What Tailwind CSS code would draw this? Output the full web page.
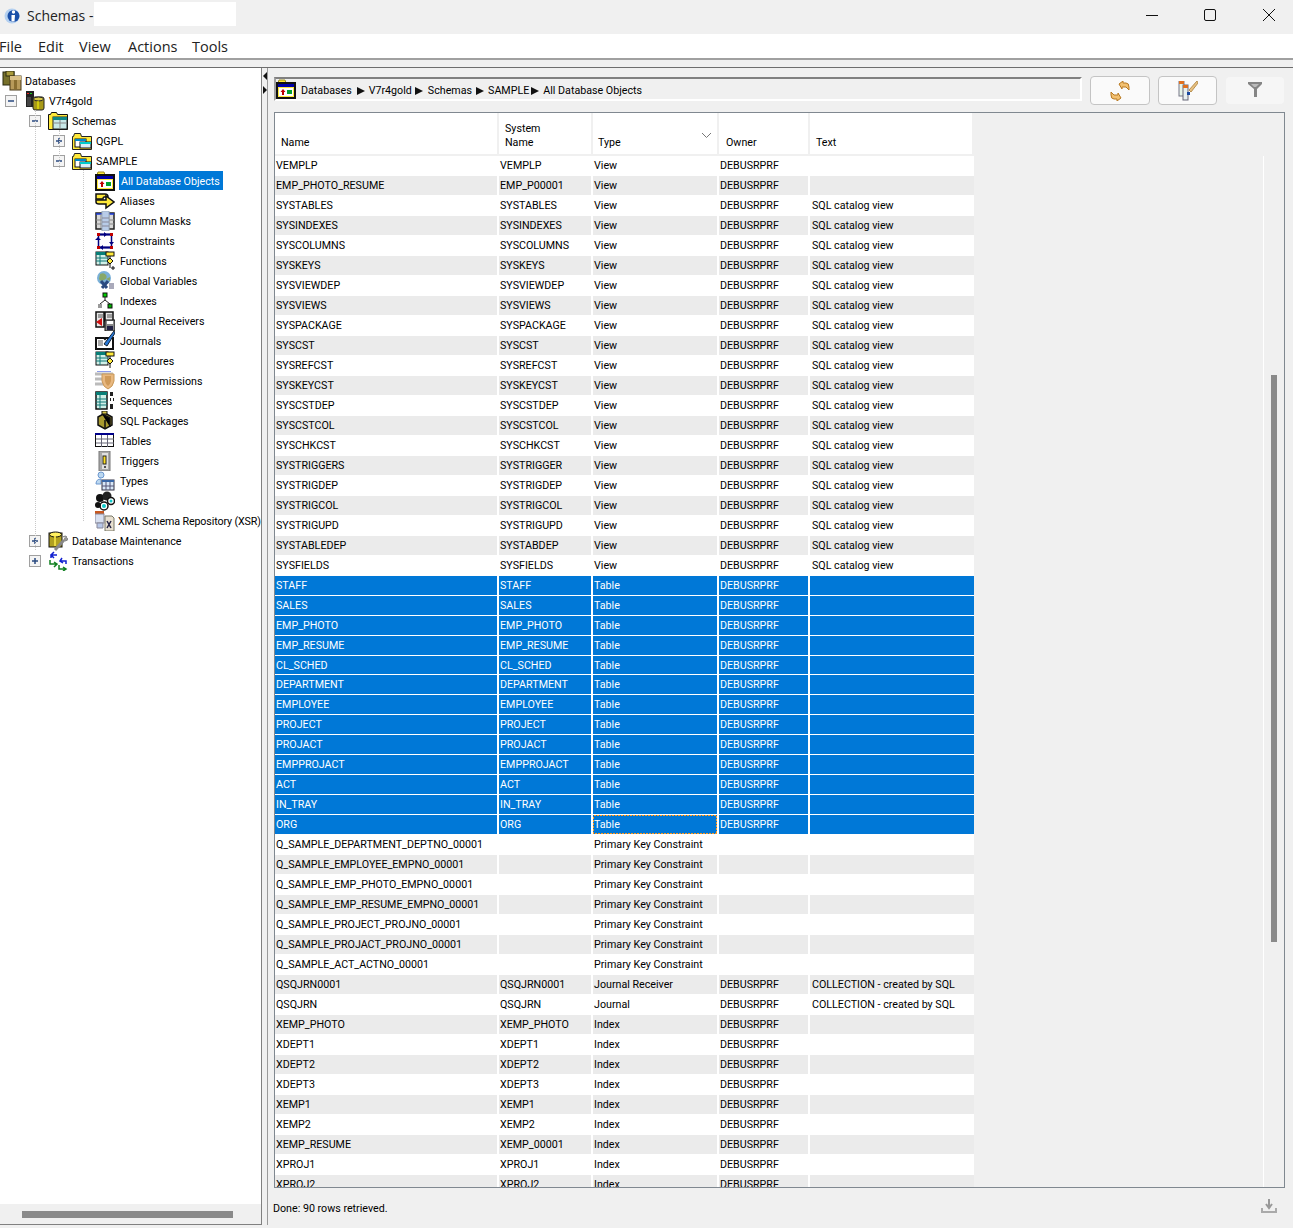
<!DOCTYPE html>
<html lang="en">
<head>
  <meta charset="UTF-8">
  <title>Schemas</title>
  <script src="https://cdn.jsdelivr.net/npm/@tailwindcss/browser@4"></script>
</head>
<body class="bg-[#f0f0f0] overflow-hidden">

<svg class="hidden">
  <defs>
    <symbol id="i-db" viewBox="0 0 20 20"><rect x="1" y="1" width="11" height="13" fill="#77702a" stroke="#2a2a10"/><rect x="4" y="0" width="8" height="5" fill="#a89a3a" stroke="#2a2a10"/><rect x="8" y="5" width="11" height="14" fill="#b89a5a" stroke="#4a3a18"/><rect x="8" y="5" width="11" height="4" fill="#d8c088"/><rect x="12" y="9" width="3" height="9" fill="#8a6e30"/></symbol>
    <symbol id="i-sys" viewBox="0 0 20 20"><rect x="1" y="0" width="8" height="16" fill="#222"/><rect x="2" y="2" width="2" height="1" fill="#e22"/><rect x="5" y="2" width="2" height="1" fill="#2c2"/><path d="M3 6v9M5 6v9" stroke="#666"/><rect x="8" y="6" width="11" height="13" rx="2" fill="#a89a18" stroke="#222"/><ellipse cx="13.5" cy="8" rx="5" ry="2" fill="#d8c848" stroke="#222"/><path d="M13 10v8" stroke="#ff0"/></symbol>
    <symbol id="i-schemas" viewBox="0 0 20 20"><path d="M.5 18.500V3.500h2l1-2h5l1 2h10v15z" fill="#ffe93a" stroke="#111"/><rect x="5" y="6" width="14" height="12" fill="#c8e8e8" stroke="#222"/><rect x="5" y="6" width="14" height="3" fill="#108888"/><path d="M5 12h14M12 9v9" stroke="#888"/></symbol>
    <symbol id="i-lib" viewBox="0 0 20 20"><path d="M.5 18.500V5.500h1l1-3h6l1 3h10v13z" fill="#ffe93a" stroke="#222"/><rect x="3" y="8" width="11" height="8" fill="#fff" stroke="#111"/><rect x="3" y="8" width="11" height="2" fill="#08c"/><rect x="8" y="11" width="11" height="6" fill="#d8f0f8" stroke="#111"/><rect x="8" y="11" width="11" height="2" fill="#0cc"/></symbol>
    <symbol id="i-all" viewBox="0 0 20 20"><path d="M2 4l1-3h6l1 3" fill="#ffe93a" stroke="#998a20"/><rect x="1" y="4" width="18" height="15" fill="#ffe93a" stroke="#111" stroke-width="2"/><rect x="2" y="5" width="16" height="3" fill="#0000a8"/><rect x="3" y="9" width="14" height="8" fill="#fff"/><path d="M7 10l2.500 3h-1.500v3h-2v-3h-1.500z" fill="#c00000"/><rect x="11" y="11" width="5" height="4" fill="#00a030"/></symbol>
    <symbol id="i-alias" viewBox="0 0 20 20"><path d="M1 3h9q3 0 3 3h-4q-1 0-1 2h-7z" fill="#ffe93a" stroke="#111" stroke-width="1.500"/><path d="M1 9h10v-4l8 6-8 6v-4h-7q-3 0-3-2z" fill="#ffe93a" stroke="#111" stroke-width="1.500"/></symbol>
    <symbol id="i-mask" viewBox="0 0 20 20"><rect x="1" y="2" width="18" height="16" fill="#d8d8d8" stroke="#222" stroke-width="1.500"/><path d="M1 3h18" stroke="#1838d8" stroke-width="1.500"/><path d="M1 9h18M1 13h18M6 3v14M14 3v14" stroke="#888"/><rect x="7" y="0" width="7" height="20" fill="#b8cce8" stroke="#9ab" /><path d="M7 7h7M7 11h7M7 15h7" stroke="#889"/></symbol>
    <symbol id="i-con" viewBox="0 0 20 20"><rect x="3.500" y="3.500" width="13" height="13" fill="none" stroke="#000080" stroke-width="1.500"/><path d="M3.500 3.500h13M3.500 16.500h13" stroke="#000080" stroke-width="2"/><rect x="2" y="2" width="3" height="3" fill="#c00000"/><rect x="15" y="2" width="3" height="3" fill="#c00000"/><rect x="2" y="15" width="3" height="3" fill="#c00000"/><rect x="15" y="15" width="3" height="3" fill="#c00000"/><path d="M9 1l3 2.500-3 2.500zM0 9l3-3 3 3zM14 11l2.500 3 2.500-3zM8 14l-3 2.500 3 2.500z" fill="#000080"/></symbol>
    <symbol id="i-func" viewBox="0 0 20 20"><rect x="1" y="1" width="12" height="13" fill="#d0f0e8" stroke="#111"/><rect x="1" y="1" width="12" height="3" fill="#088078"/><path d="M1 7h12M1 10h12M5 4v10" stroke="#177"/><rect x="11" y="1" width="8" height="4" fill="#ffe93a" stroke="#111"/><path d="M15 5v3" stroke="#111"/><path d="M15 7l3 3-3 3-3-3z" fill="#ffe93a" stroke="#111"/><path d="M15 13v4M16 17h4M18 15v4" stroke="#111"/></symbol>
    <symbol id="i-proc" viewBox="0 0 20 20"><rect x="1" y="1" width="12" height="13" fill="#d0f0e8" stroke="#111"/><rect x="1" y="1" width="12" height="3" fill="#088078"/><path d="M1 7h12M1 10h12M5 4v10" stroke="#177"/><rect x="11" y="1" width="8" height="4" fill="#ffe93a" stroke="#111"/><path d="M15 5v3" stroke="#111"/><path d="M15 7l3 3-3 3-3-3z" fill="#ffe93a" stroke="#111"/><path d="M15 13v4" stroke="#111"/></symbol>
    <symbol id="i-glob" viewBox="0 0 20 20"><circle cx="9" cy="7" r="7" fill="#7ab0d8"/><path d="M5 3q4-2 6 1t-2 5-5-1zM11 8l4-2 0 4z" fill="#88a868"/><path d="M6 10l6 7M13 10l-6 7" stroke="#2a4a80" stroke-width="3"/><path d="M14 13h5M14 15h5M14 17h5" stroke="#557" /></symbol>
    <symbol id="i-idx" viewBox="0 0 20 20"><rect x="8" y="2" width="4" height="4" fill="#00d000" stroke="#111"/><path d="M10 6v3M10 9l-5 4M10 9l5 4" stroke="#222"/><rect x="3" y="13" width="4" height="4" fill="#999"/><rect x="13" y="13" width="4" height="4" fill="#00b000" stroke="#111"/></symbol>
    <symbol id="i-rcv" viewBox="0 0 20 20"><path d="M1 1h8v15h-8zM10 1h8v9h-8z" fill="#e8e8e8" stroke="#111" stroke-width="1.500"/><path d="M3 4h5M3 6h5M12 4h5M12 6h5" stroke="#555"/><path d="M7 7v8l-6-4z" fill="#d01010"/><rect x="10" y="9" width="10" height="11" fill="#888" stroke="#111"/><rect x="12" y="10" width="6" height="3" fill="#fff"/><rect x="12" y="15" width="6" height="4" fill="#224"/></symbol>
    <symbol id="i-jrn" viewBox="0 0 20 20"><path d="M1 7h8l1 1 1-1h7v11h-17z" fill="#fff" stroke="#111" stroke-width="2"/><path d="M3 10h5M3 12h5M3 14h5" stroke="#555"/><path d="M19 0l-10 13 3 2 8-13z" fill="#2878d8" stroke="#123"/></symbol>
    <symbol id="i-perm" viewBox="0 0 20 20"><path d="M0 3h18M0 8h8M0 13h8" stroke="#bbb" stroke-width="3"/><path d="M2 0h14" stroke="#1838d8"/><path d="M7 3h12v7q-1 6-6 8-5-2-6-8z" fill="#e8b880" stroke="#c89858"/><path d="M10 5h6v5q-1 4-3 5-2-1-3-5z" fill="#d09a58"/></symbol>
    <symbol id="i-seq" viewBox="0 0 20 20"><rect x="1" y="1" width="11" height="17" fill="#d0f0e8" stroke="#111" stroke-width="1.500"/><rect x="1" y="1" width="11" height="3" fill="#088078"/><path d="M1 8h11M1 11h11M1 14h11M5 4v14" stroke="#177"/><path d="M15 1h3v4h-3zM15 7h1v3h-1zM18 7h1v3h-1zM15 13h3v5h-3z" fill="#222"/></symbol>
    <symbol id="i-pkg" viewBox="0 0 20 20"><path d="M3 6l7-4 7 4v8l-7 4-7-4z" fill="#a89a30" stroke="#111" stroke-width="1.500"/><path d="M7 3l8 4v9M10 9v8" stroke="#111" stroke-width="1.500"/><rect x="7" y="0" width="5" height="3" fill="#d8c848" stroke="#111"/></symbol>
    <symbol id="i-tab" viewBox="0 0 20 20"><rect x=".5" y="2.500" width="18" height="13" fill="#fff" stroke="#111"/><rect x="0" y="2" width="19" height="2" fill="#00008a"/><path d="M6.500 4v12M12.500 4v12M1 8h18M1 12h18" stroke="#667"/></symbol>
    <symbol id="i-trg" viewBox="0 0 20 20"><rect x="4" y="0" width="11" height="20" fill="#a8a8a8" stroke="#777"/><rect x="7" y="2" width="6" height="16" fill="#e0e0e0"/><rect x="8" y="5" width="3" height="8" fill="#ffe020" stroke="#222"/><circle cx="10" cy="16" r="1" fill="#222"/></symbol>
    <symbol id="i-typ" viewBox="0 0 20 20"><circle cx="6" cy="4" r="3" fill="#bcd8f0" stroke="#6c98d0"/><path d="M1 13q0-5 5-5v5z" fill="#bcd8f0" stroke="#6c98d0"/><rect x="7" y="9" width="12" height="10" fill="#d8e8f8" stroke="#334"/><rect x="7" y="9" width="12" height="2" fill="#3a68a8"/><path d="M11 11v8M15 11v8M7 15h12" stroke="#557"/></symbol>
    <symbol id="i-view" viewBox="0 0 20 20"><circle cx="5" cy="7" r="4" fill="#111"/><circle cx="12" cy="5" r="4.500" fill="#222"/><circle cx="16" cy="10" r="3.500" fill="#fff" stroke="#111" stroke-width="1.500"/><circle cx="16" cy="10" r="1.500" fill="#1cc"/><circle cx="9" cy="15" r="4" fill="#fff" stroke="#111" stroke-width="1.500"/><circle cx="9" cy="15" r="2" fill="#1cc"/><circle cx="3" cy="14" r="3" fill="#111"/></symbol>
    <symbol id="i-xsr" viewBox="0 0 20 20"><rect x="0" y="0" width="9" height="3" fill="#c85820"/><rect x="0" y="3" width="9" height="9" fill="#d8e0f0" stroke="#889"/><path d="M2 12h6v5h-6z" fill="#b8c8e8" stroke="#889"/><path d="M10 5h7l2 2v13h-9z" fill="#e8e0d0" stroke="#776"/><path d="M12 10l4 7M16 10l-4 7" stroke="#224" stroke-width="1.500"/></symbol>
    <symbol id="i-mnt" viewBox="0 0 20 20"><rect x="1" y="2" width="13" height="14" fill="#b0a020" stroke="#111"/><ellipse cx="7.500" cy="3.500" rx="6" ry="2.500" fill="#fff060" stroke="#111"/><path d="M7 5v10" stroke="#e8d840" stroke-width="2"/><path d="M7 19l9-10" stroke="#888" stroke-width="3"/><path d="M14 6q4-2 5 0l-3 2 1 2q3 0 3-3" fill="#999" stroke="#888"/></symbol>
    <symbol id="i-trn" viewBox="0 0 20 20"><path d="M3 7v-3h6M6 1l-3 3 3 3" fill="none" stroke="#1020d0" stroke-width="1.500"/><path d="M2 9v4h6M6 11l3 2-3 3" fill="none" stroke="#108020" stroke-width="1.500"/><path d="M18 13v-3h-6M14 7l-2 3 3 2" fill="none" stroke="#1020d0" stroke-width="1.500"/><path d="M11 14v4h6M15 16l3 2-3 2" fill="none" stroke="#108020" stroke-width="1.500"/></symbol>
    <symbol id="i-plus" viewBox="0 0 12 12"><rect x=".5" y=".5" width="11" height="11" fill="#f4f4f4" stroke="#a0a0a0"/><path d="M3 6h6M6 3v6" stroke="#2a4a80" stroke-width="1.500"/></symbol>
    <symbol id="i-minus" viewBox="0 0 12 12"><rect x=".5" y=".5" width="11" height="11" fill="#f4f4f4" stroke="#a0a0a0"/><path d="M3 6h6" stroke="#2a4a80" stroke-width="1.500"/></symbol>
    <symbol id="i-tri" viewBox="0 0 8 8"><path d="M0 0l8 4-8 4z" fill="#111"/></symbol>
  </defs>
</svg>

<div class="w-[1293px] h-[1228px] flex flex-col font-['Roboto',sans-serif] text-[10.7px] text-black">

  <!-- title bar -->
  <div class="h-[34px] flex items-center bg-[#f0f0f0] shrink-0">
    <svg class="w-[16px] h-[16px] ml-[4px] mt-[-3px]" viewBox="0 0 16 16"><circle cx="8" cy="8" r="7.500" fill="#b4d0f0"/><circle cx="9.500" cy="8" r="6" fill="#1a4fa8"/><circle cx="9.500" cy="4" r="1.700" fill="#fff"/><path d="M7.500 7h3.500l-.5 6.500h-3z" fill="#fff"/></svg>
    <span class="ml-[7px] mt-[-3px] text-[14px] font-['Open_Sans',sans-serif] w-[67px] text-[#222] whitespace-nowrap">Schemas -</span>
    <div class="w-[142px] h-[24px] bg-white mt-[-6px]"></div>
    <div class="ml-auto flex items-center">
      <svg class="w-[12px] h-[12px] mr-[46px] mt-[-4px]" viewBox="0 0 12 12"><path d="M0 6.500h12" stroke="#111"/></svg>
      <svg class="w-[12px] h-[12px] mr-[47px] mt-[-4px]" viewBox="0 0 12 12"><rect x=".5" y=".5" width="11" height="11" rx="1.500" fill="none" stroke="#111"/></svg>
      <svg class="w-[12px] h-[12px] mr-[18px] mt-[-4px]" viewBox="0 0 12 12"><path d="M0 0l12 12M12 0l-12 12" stroke="#111"/></svg>
    </div>
  </div>

  <!-- menu bar -->
  <div class="h-[24px] bg-white flex items-center shrink-0 text-[14.5px] font-['Open_Sans',sans-serif] text-[#222] pt-[2px]">
    <span class="ml-[-1px] w-[39px]">File</span>
    <span class="w-[41px]">Edit</span>
    <span class="w-[49px]">View</span>
    <span class="w-[64px]">Actions</span>
    <span>Tools</span>
  </div>
  <div class="h-[2px] bg-[#a0a0a0] shrink-0"></div>
  <div class="h-[7px] shrink-0"></div>
  <div class="h-[1px] bg-[#6d6d6d] shrink-0"></div>

  <div class="flex flex-1 min-h-0">

    <!-- navigation tree -->
    <div class="w-[261px] h-[1157px] flex flex-col shrink-0">
      <div class="relative h-[1137px] bg-white pt-[3px] overflow-hidden [&_span]:mt-[2px]">
        <div class="absolute left-[35px] top-[42px] h-[440px] border-l border-dotted border-[#c8c8c8]"></div>
        <div class="absolute left-[59px] top-[62px] h-[40px] border-l border-dotted border-[#c8c8c8]"></div>
        <div class="absolute left-[83px] top-[102px] h-[351px] border-l border-dotted border-[#c8c8c8]"></div>

        <div class="flex items-center h-5"><svg class="w-5 h-5 ml-[2px]"><use href="#i-db"/></svg><span class="ml-[3px]">Databases</span></div>
        <div class="flex items-center h-5"><svg class="w-3 h-3 ml-[5px]"><use href="#i-minus"/></svg><svg class="w-5 h-5 ml-[8px]"><use href="#i-sys"/></svg><span class="ml-[4px]">V7r4gold</span></div>
        <div class="flex items-center h-5"><svg class="w-3 h-3 ml-[29px]"><use href="#i-minus"/></svg><svg class="w-5 h-5 ml-[7px]"><use href="#i-schemas"/></svg><span class="ml-[4px]">Schemas</span></div>
        <div class="flex items-center h-5"><svg class="w-3 h-3 ml-[53px]"><use href="#i-plus"/></svg><svg class="w-5 h-5 ml-[7px]"><use href="#i-lib"/></svg><span class="ml-[4px]">QGPL</span></div>
        <div class="flex items-center h-5"><svg class="w-3 h-3 ml-[53px]"><use href="#i-minus"/></svg><svg class="w-5 h-5 ml-[7px]"><use href="#i-lib"/></svg><span class="ml-[4px]">SAMPLE</span></div>
        <div class="flex items-start h-5 pl-[95px]"><svg class="w-5 h-5"><use href="#i-all"/></svg><span class="ml-[4px] !mt-0 bg-[#0078d7] text-white pl-[2px] pr-[3px] h-[19px] leading-[21px]">All Database Objects</span></div>
        <div class="flex items-center h-5 pl-[95px]"><svg class="w-5 h-5"><use href="#i-alias"/></svg><span class="ml-[5px]">Aliases</span></div>
        <div class="flex items-center h-5 pl-[95px]"><svg class="w-5 h-5"><use href="#i-mask"/></svg><span class="ml-[5px]">Column Masks</span></div>
        <div class="flex items-center h-5 pl-[95px]"><svg class="w-5 h-5"><use href="#i-con"/></svg><span class="ml-[5px]">Constraints</span></div>
        <div class="flex items-center h-5 pl-[95px]"><svg class="w-5 h-5"><use href="#i-func"/></svg><span class="ml-[5px]">Functions</span></div>
        <div class="flex items-center h-5 pl-[95px]"><svg class="w-5 h-5"><use href="#i-glob"/></svg><span class="ml-[5px]">Global Variables</span></div>
        <div class="flex items-center h-5 pl-[95px]"><svg class="w-5 h-5"><use href="#i-idx"/></svg><span class="ml-[5px]">Indexes</span></div>
        <div class="flex items-center h-5 pl-[95px]"><svg class="w-5 h-5"><use href="#i-rcv"/></svg><span class="ml-[5px]">Journal Receivers</span></div>
        <div class="flex items-center h-5 pl-[95px]"><svg class="w-5 h-5"><use href="#i-jrn"/></svg><span class="ml-[5px]">Journals</span></div>
        <div class="flex items-center h-5 pl-[95px]"><svg class="w-5 h-5"><use href="#i-proc"/></svg><span class="ml-[5px]">Procedures</span></div>
        <div class="flex items-center h-5 pl-[95px]"><svg class="w-5 h-5"><use href="#i-perm"/></svg><span class="ml-[5px]">Row Permissions</span></div>
        <div class="flex items-center h-5 pl-[95px]"><svg class="w-5 h-5"><use href="#i-seq"/></svg><span class="ml-[5px]">Sequences</span></div>
        <div class="flex items-center h-5 pl-[95px]"><svg class="w-5 h-5"><use href="#i-pkg"/></svg><span class="ml-[5px]">SQL Packages</span></div>
        <div class="flex items-center h-5 pl-[95px]"><svg class="w-5 h-5"><use href="#i-tab"/></svg><span class="ml-[5px]">Tables</span></div>
        <div class="flex items-center h-5 pl-[95px]"><svg class="w-5 h-5"><use href="#i-trg"/></svg><span class="ml-[5px]">Triggers</span></div>
        <div class="flex items-center h-5 pl-[95px]"><svg class="w-5 h-5"><use href="#i-typ"/></svg><span class="ml-[5px]">Types</span></div>
        <div class="flex items-center h-5 pl-[95px]"><svg class="w-5 h-5"><use href="#i-view"/></svg><span class="ml-[5px]">Views</span></div>
        <div class="flex items-center h-5 pl-[95px] whitespace-nowrap"><svg class="w-5 h-5 shrink-0"><use href="#i-xsr"/></svg><span class="ml-[3px] tracking-[-0.12px]">XML Schema Repository (XSR)</span></div>
        <div class="flex items-center h-5"><svg class="w-3 h-3 ml-[29px]"><use href="#i-plus"/></svg><svg class="w-5 h-5 ml-[7px]"><use href="#i-mnt"/></svg><span class="ml-[4px]">Database Maintenance</span></div>
        <div class="flex items-center h-5"><svg class="w-3 h-3 ml-[29px]"><use href="#i-plus"/></svg><svg class="w-5 h-5 ml-[7px]"><use href="#i-trn"/></svg><span class="ml-[4px]">Transactions</span></div>
      </div>
      <div class="h-[20px] bg-[#f0f0f0] flex items-center pl-[22px] shrink-0">
        <div class="w-[211px] h-[7px] bg-[#8a8a8a]"></div>
      </div>
      <div class="h-[1px] bg-[#808080] shrink-0"></div>
    </div>

    <!-- splitter -->
    <div class="w-[1px] h-[1157px] bg-[#808080] shrink-0"></div>
    <div class="w-[5px] flex flex-col items-center pt-[4px] shrink-0">
      <svg class="w-[4px] h-[8px]" viewBox="0 0 4 8"><path d="M4 0v8l-4-4z" fill="#111"/></svg>
      <svg class="w-[4px] h-[8px] mt-[6px]" viewBox="0 0 4 8"><path d="M0 0v8l4-4z" fill="#111"/></svg>
    </div>

    <!-- right pane -->
    <div class="flex-1 min-w-0 h-[1157px] border-l border-[#9a9a9a] flex flex-col">

      <div class="flex items-start h-[44px] pl-[6px] pt-[8px] shrink-0">
        <div class="w-[808px] h-[24px] mt-[1px] border-2 border-t-[#808080] border-l-[#a0a0a0] border-r-white border-b-white flex items-center pt-[4px]">
          <svg class="w-5 h-5 mt-[-4px]"><use href="#i-all"/></svg>
          <span class="ml-[5px]">Databases</span>
          <svg class="w-2 h-2 ml-[5px]"><use href="#i-tri"/></svg>
          <span class="ml-[4px]">V7r4gold</span>
          <svg class="w-2 h-2 ml-[3px]"><use href="#i-tri"/></svg>
          <span class="ml-[5px]">Schemas</span>
          <svg class="w-2 h-2 ml-[4px]"><use href="#i-tri"/></svg>
          <span class="ml-[4px]">SAMPLE</span>
          <svg class="w-2 h-2 ml-[2px]"><use href="#i-tri"/></svg>
          <span class="ml-[4px]">All Database Objects</span>
        </div>
        <button class="w-[60px] h-[29px] ml-[8px] bg-[#fafafa] border border-[#c4c4c4] rounded-[4px] flex items-center justify-center">
          <svg class="w-5 h-5" viewBox="0 0 20 20"><path d="M9 3l4-3v2h3q3 0 3 4v3l-3-3h-4v2z" fill="#f2c070" stroke="#b87820"/><path d="M11 17l-4 3v-2h-3q-3 0-3-4v-3l3 3h4v-2z" fill="#f2c070" stroke="#b87820"/></svg>
        </button>
        <button class="w-[59px] h-[29px] ml-[8px] bg-[#fafafa] border border-[#c4c4c4] rounded-[4px] flex items-center justify-center">
          <svg class="w-5 h-5" viewBox="0 0 20 20"><rect x="1" y="0" width="5" height="15" fill="#e8f4e8" stroke="#778"/><rect x="1" y="0" width="5" height="3" fill="#e07020"/><rect x="5" y="4" width="5" height="15" fill="#e8f0f0" stroke="#667"/><rect x="5" y="4" width="5" height="3" fill="#e07020"/><path d="M19 0l-8 9 2 2 7-9z" fill="#e8c080" stroke="#b89050"/><rect x="9" y="11" width="3" height="3" fill="#1848a0"/></svg>
        </button>
        <button class="w-[58px] h-[27px] ml-[9px] mt-[1px] bg-[#f6f6f6] rounded-[4px] flex items-center justify-center">
          <svg class="w-[14px] h-[15px] mt-[-3px]" viewBox="0 0 14 15"><path d="M0 0h14v2l-5 5v8h-3v-8l-6-5z" fill="#858585"/><path d="M3 2h8l-3 3h-2z" fill="#bbb"/></svg>
        </button>
      </div>

      <!-- results table -->
      <div class="ml-[6px] w-[1011px] h-[1076px] border border-[#808890] flex shrink-0">
        <div class="w-[699px] flex flex-col min-h-0 shrink-0">
          <div class="grid grid-cols-[222px_92px_124px_89px_162px] gap-x-[2px] h-[41px] shrink-0 leading-[14px]">
            <div class="bg-white flex items-end pl-[6px] pb-[4px]">Name</div>
            <div class="bg-white flex items-end pl-[6px] pb-[4px]">System<br>Name</div>
            <div class="bg-white flex items-end pl-[5px] pb-[4px] relative">Type<svg class="absolute right-[6px] top-[20px] w-[9px] h-[5px]" viewBox="0 0 9 5"><path d="M0 0l4.500 4.500 4.500-4.500" fill="none" stroke="#777"/></svg></div>
            <div class="bg-white flex items-end pl-[7px] pb-[4px]">Owner</div>
            <div class="bg-white flex items-end pl-[6px] pb-[4px]">Text</div>
          </div>
          <div id="filas" class="mt-[2px] flex-1 min-h-0 overflow-hidden"></div>
        </div>
        <div class="flex-1"></div>
        <div class="w-[21px] shrink-0 mt-[43px] border-l border-white pt-[219px] pl-[7px]">
          <div class="w-[6px] h-[567px] bg-[#8a8a8a]"></div>
        </div>
      </div>

      <div class="flex items-center justify-between h-[36px] pl-[5px] pr-[16px] pt-[6px] shrink-0">
        <span>Done: 90 rows retrieved.</span>
        <svg class="w-4 h-4 mt-[-6px]" viewBox="0 0 16 16"><path d="M8 1v8M5 6l3 4 3-4" fill="none" stroke="#999" stroke-width="2"/><path d="M1 10v4h14v-4" fill="none" stroke="#aaa" stroke-width="2"/></svg>
      </div>
    </div>
  </div>
</div>

<script>
  const SQL = "SQL catalog view";
  const COL = "COLLECTION - created by SQL";
  const OWN = "DEBUSRPRF";
  const datos = [
    ["VEMPLP", "VEMPLP", "View", OWN, ""],
    ["EMP_PHOTO_RESUME", "EMP_P00001", "View", OWN, ""],
    ["SYSTABLES", "SYSTABLES", "View", OWN, SQL],
    ["SYSINDEXES", "SYSINDEXES", "View", OWN, SQL],
    ["SYSCOLUMNS", "SYSCOLUMNS", "View", OWN, SQL],
    ["SYSKEYS", "SYSKEYS", "View", OWN, SQL],
    ["SYSVIEWDEP", "SYSVIEWDEP", "View", OWN, SQL],
    ["SYSVIEWS", "SYSVIEWS", "View", OWN, SQL],
    ["SYSPACKAGE", "SYSPACKAGE", "View", OWN, SQL],
    ["SYSCST", "SYSCST", "View", OWN, SQL],
    ["SYSREFCST", "SYSREFCST", "View", OWN, SQL],
    ["SYSKEYCST", "SYSKEYCST", "View", OWN, SQL],
    ["SYSCSTDEP", "SYSCSTDEP", "View", OWN, SQL],
    ["SYSCSTCOL", "SYSCSTCOL", "View", OWN, SQL],
    ["SYSCHKCST", "SYSCHKCST", "View", OWN, SQL],
    ["SYSTRIGGERS", "SYSTRIGGER", "View", OWN, SQL],
    ["SYSTRIGDEP", "SYSTRIGDEP", "View", OWN, SQL],
    ["SYSTRIGCOL", "SYSTRIGCOL", "View", OWN, SQL],
    ["SYSTRIGUPD", "SYSTRIGUPD", "View", OWN, SQL],
    ["SYSTABLEDEP", "SYSTABDEP", "View", OWN, SQL],
    ["SYSFIELDS", "SYSFIELDS", "View", OWN, SQL],
    ["STAFF", "STAFF", "Table", OWN, ""],
    ["SALES", "SALES", "Table", OWN, ""],
    ["EMP_PHOTO", "EMP_PHOTO", "Table", OWN, ""],
    ["EMP_RESUME", "EMP_RESUME", "Table", OWN, ""],
    ["CL_SCHED", "CL_SCHED", "Table", OWN, ""],
    ["DEPARTMENT", "DEPARTMENT", "Table", OWN, ""],
    ["EMPLOYEE", "EMPLOYEE", "Table", OWN, ""],
    ["PROJECT", "PROJECT", "Table", OWN, ""],
    ["PROJACT", "PROJACT", "Table", OWN, ""],
    ["EMPPROJACT", "EMPPROJACT", "Table", OWN, ""],
    ["ACT", "ACT", "Table", OWN, ""],
    ["IN_TRAY", "IN_TRAY", "Table", OWN, ""],
    ["ORG", "ORG", "Table", OWN, ""],
    ["Q_SAMPLE_DEPARTMENT_DEPTNO_00001", "", "Primary Key Constraint", "", ""],
    ["Q_SAMPLE_EMPLOYEE_EMPNO_00001", "", "Primary Key Constraint", "", ""],
    ["Q_SAMPLE_EMP_PHOTO_EMPNO_00001", "", "Primary Key Constraint", "", ""],
    ["Q_SAMPLE_EMP_RESUME_EMPNO_00001", "", "Primary Key Constraint", "", ""],
    ["Q_SAMPLE_PROJECT_PROJNO_00001", "", "Primary Key Constraint", "", ""],
    ["Q_SAMPLE_PROJACT_PROJNO_00001", "", "Primary Key Constraint", "", ""],
    ["Q_SAMPLE_ACT_ACTNO_00001", "", "Primary Key Constraint", "", ""],
    ["QSQJRN0001", "QSQJRN0001", "Journal Receiver", OWN, COL],
    ["QSQJRN", "QSQJRN", "Journal", OWN, COL],
    ["XEMP_PHOTO", "XEMP_PHOTO", "Index", OWN, ""],
    ["XDEPT1", "XDEPT1", "Index", OWN, ""],
    ["XDEPT2", "XDEPT2", "Index", OWN, ""],
    ["XDEPT3", "XDEPT3", "Index", OWN, ""],
    ["XEMP1", "XEMP1", "Index", OWN, ""],
    ["XEMP2", "XEMP2", "Index", OWN, ""],
    ["XEMP_RESUME", "XEMP_00001", "Index", OWN, ""],
    ["XPROJ1", "XPROJ1", "Index", OWN, ""],
    ["XPROJ2", "XPROJ2", "Index", OWN, ""]
  ];

  // celda con foco: borde punteado naranja
  const foco = '<svg class="absolute left-0 top-0" width="124" height="19" shape-rendering="crispEdges"><rect x=".5" y=".5" width="123" height="18" fill="none" stroke="#ff9a20" stroke-dasharray="2 1"/></svg>';

  const filas = document.getElementById("filas");
  datos.forEach((d, i) => {
    const sel = d[2] === "Table";
    let fondo = i % 2 ? "bg-[#ebebeb]" : "bg-white";
    if (sel) fondo = "bg-[#0078d7] text-white";
    const alto = d[0] === "CL_SCHED" ? "h-[19px]" : "h-5";
    const celdas = d.map((txt, c) => {
      const extra = c === 4 ? "pl-[2px] pt-[2px]" : "pl-[1px] pt-[2px]";
      const marca = d[0] === "ORG" && c === 2 ? foco : "";
      return `<div class="${fondo} ${extra} relative flex items-center whitespace-nowrap overflow-hidden">${txt}${marca}</div>`;
    }).join("");
    filas.innerHTML += `<div class="${alto} bg-white pb-[1px] grid grid-cols-[222px_92px_124px_89px_164px] gap-x-[2px]">${celdas}</div>`;
  });
</script>
</body>
</html>
